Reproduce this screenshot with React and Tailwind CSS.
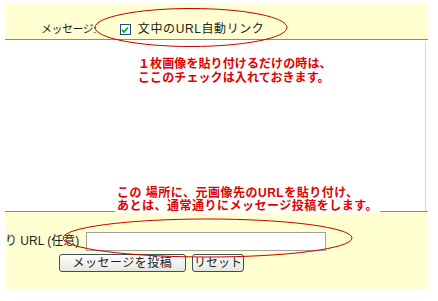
import React from 'react';

const font = { fontFamily: '"Liberation Sans", "Noto Sans CJK JP", sans-serif' };

const App = () => {
  return (
    <div className="relative w-[438px] h-[301px] bg-white overflow-hidden text-[12px] text-[#222]" style={font}>
      <div className="pt-[3px] pl-[5px] w-[428px]">
        {/* 上部の設定欄 */}
        <div className="h-[37px] bg-[#ffffd2] border-b border-[#8a8a8a] flex items-end pb-[2px]">
          <span className="ml-[36px] leading-[16px] text-[11px] tracking-[-0.5px]">メッセージ:</span>
          <span className="ml-[24px] w-[11px] h-[11px] border border-[#1c5180] bg-white flex items-center justify-center mb-[2px]">
            <svg width="8" height="8" viewBox="0 0 8 8">
              <path d="M1 4 L3 6 L7 1.5" stroke="#21a121" strokeWidth="1.8" fill="none" />
            </svg>
          </span>
          <span className="ml-[7px] leading-[16px] tracking-[0.6px]">文中のURL自動リンク</span>
        </div>

        {/* 本文エリア */}
        <div className="h-[171px] bg-white flex">
          <div className="flex-1 pt-[17px] pl-[133px] font-bold text-[#e00000] leading-[14px] tracking-[0.1px]">
            <p>１枚画像を貼り付けるだけの時は、</p>
            <p>ここのチェックは入れておきます。</p>
          </div>
          <div className="w-[3px] border-l border-[#d8d8d8] mt-[2px]"></div>
        </div>

        {/* 下部の入力欄 */}
        <div className="h-[78px] bg-[#ffffd2] border-t border-[#8a8a8a] pt-[20px]">
          <div className="flex items-center">
            <span className="w-[81px] whitespace-nowrap leading-[19px]">り URL (任意)</span>
            <input className="w-[240px] h-[19px] bg-white border border-[#a0a0a0] outline-none" />
          </div>
          <div className="flex gap-[6px] ml-[54px] mt-[3px]">
            <button className="w-[127px] h-[18px] leading-[14px] rounded-[3px] border border-[#3c4e66] bg-gradient-to-b from-white to-[#e6e6e0] tracking-[0.5px]">
              メッセージを投稿
            </button>
            <button className="w-[52px] h-[18px] leading-[14px] rounded-[3px] border border-[#3c4e66] bg-gradient-to-b from-white to-[#e6e6e0]">
              リセット
            </button>
          </div>
        </div>
      </div>

      {/* 注釈 */}
      <div className="absolute left-[115px] top-[187px] px-[2px] bg-white font-bold text-[#e00000] leading-[13px] tracking-[0.5px]">
        <p>この 場所に、元画像先のURLを貼り付け、</p>
        <p>あとは、通常通りにメッセージ投稿をします。</p>
      </div>
      <svg className="absolute inset-0 pointer-events-none" width="438" height="301">
        <ellipse cx="191" cy="27.5" rx="96" ry="19" fill="none" stroke="#c40000" strokeWidth="1" />
        <ellipse cx="207.5" cy="238" rx="144.5" ry="19" fill="none" stroke="#c40000" strokeWidth="1" />
      </svg>
    </div>
  );
};

export default App;
